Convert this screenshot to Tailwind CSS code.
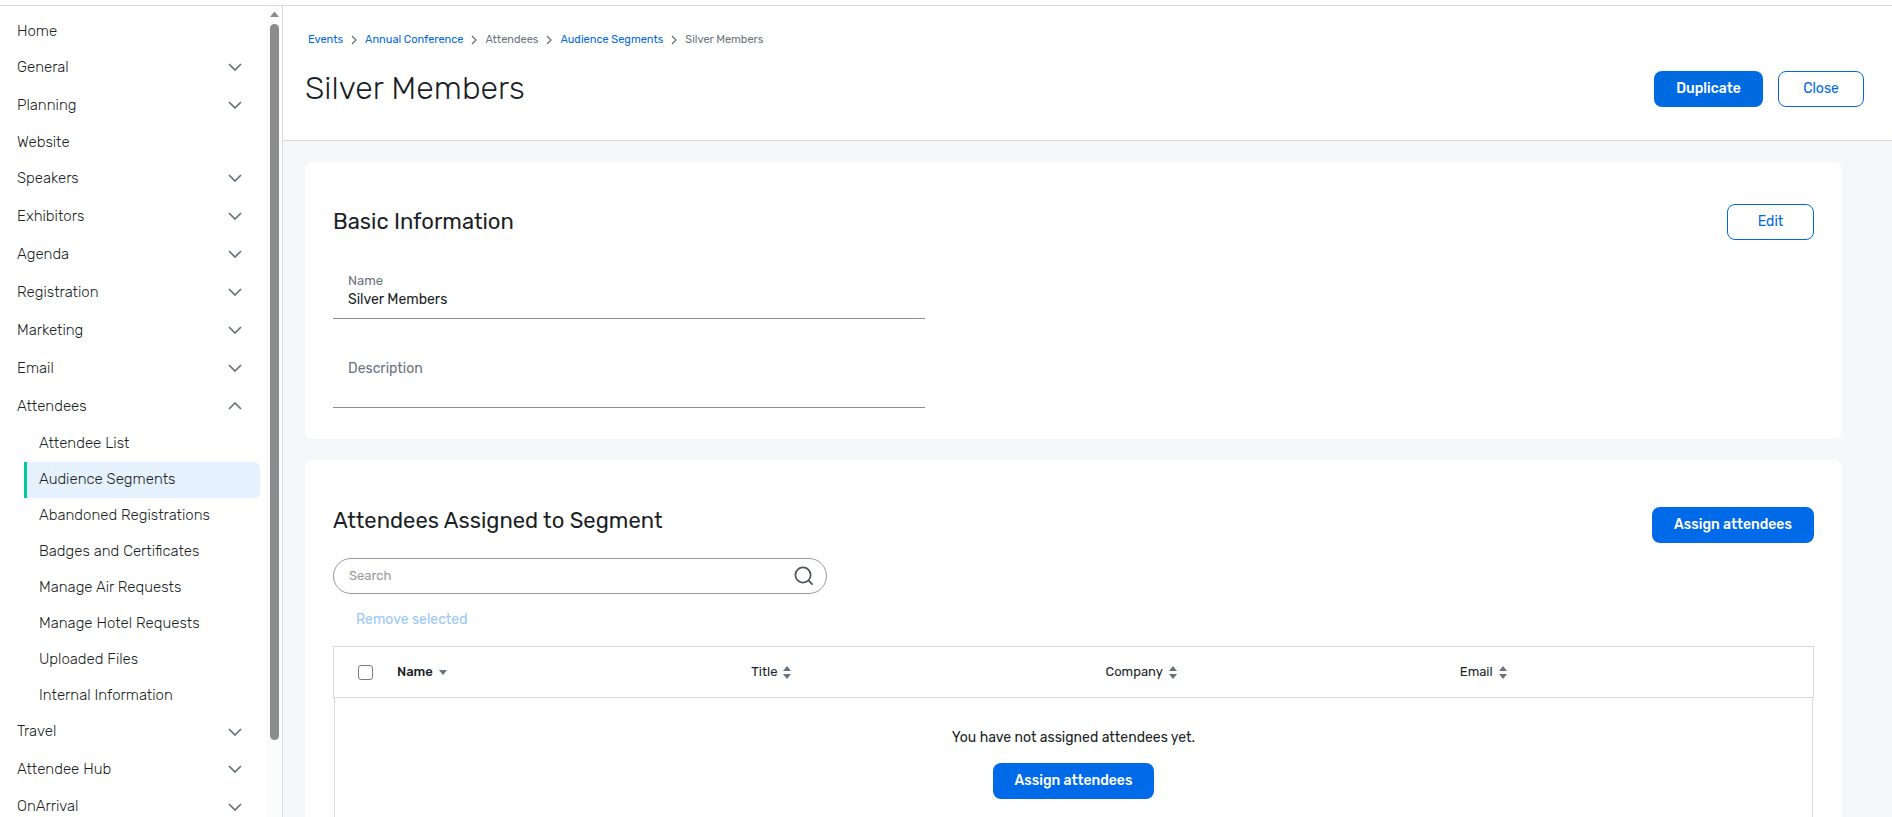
<!DOCTYPE html>
<html lang="en">
<head>
    <meta charset="UTF-8">
    <meta name="viewport" content="width=device-width, initial-scale=1.0">
    <title>Silver Members - Audience Segments</title>
    <script src="https://cdn.jsdelivr.net/npm/@tailwindcss/browser@4"></script>
</head>
<body class="flex flex-col h-screen overflow-hidden bg-white font-['Rubik','Roboto',sans-serif] text-[#1b1f27]">
<svg class="hidden">
    <symbol id="chevron" viewBox="0 0 14 8">
        <path d="M1 1l6 6 6-6" fill="none" stroke="currentColor" stroke-width="1.7"/>
    </symbol>
    <symbol id="crumb" viewBox="0 0 6 10">
        <path d="M1 1l4 4-4 4" fill="none" stroke="currentColor" stroke-width="1.3"/>
    </symbol>
    <symbol id="sort" viewBox="0 0 8 13">
        <path d="M0 5l4-5 4 5zM0 8h8l-4 5z" fill="currentColor"/>
    </symbol>
</svg>

<div class="h-1.5 shrink-0 border-b border-[#d9dadd]"></div>

<div class="flex flex-1 min-h-0">
    <!-- Sidebar -->
    <aside class="flex w-[283px] shrink-0 overflow-hidden border-r border-[#d9dadd]">
        <nav class="flex-1 pt-[7px] text-[15px] font-light text-[#1b1f27]">
            <a href="#" class="flex items-center h-9 pl-[17px]">Home</a>
            <button class="flex items-center justify-between w-full h-[38px] pl-[17px] pr-[25px] pb-0.5">General<svg class="w-3.5 h-2 text-[#69717d]"><use href="#chevron"/></svg></button>
            <button class="flex items-center justify-between w-full h-[38px] pl-[17px] pr-[25px] pb-0.5">Planning<svg class="w-3.5 h-2 text-[#69717d]"><use href="#chevron"/></svg></button>
            <a href="#" class="flex items-center h-[35px] pl-[17px]">Website</a>
            <button class="flex items-center justify-between w-full h-[38px] pl-[17px] pr-[25px] pb-0.5">Speakers<svg class="w-3.5 h-2 text-[#69717d]"><use href="#chevron"/></svg></button>
            <button class="flex items-center justify-between w-full h-[38px] pl-[17px] pr-[25px] pb-0.5">Exhibitors<svg class="w-3.5 h-2 text-[#69717d]"><use href="#chevron"/></svg></button>
            <button class="flex items-center justify-between w-full h-[38px] pl-[17px] pr-[25px] pb-0.5">Agenda<svg class="w-3.5 h-2 text-[#69717d]"><use href="#chevron"/></svg></button>
            <button class="flex items-center justify-between w-full h-[38px] pl-[17px] pr-[25px] pb-0.5">Registration<svg class="w-3.5 h-2 text-[#69717d]"><use href="#chevron"/></svg></button>
            <button class="flex items-center justify-between w-full h-[38px] pl-[17px] pr-[25px] pb-0.5">Marketing<svg class="w-3.5 h-2 text-[#69717d]"><use href="#chevron"/></svg></button>
            <button class="flex items-center justify-between w-full h-[38px] pl-[17px] pr-[25px] pb-0.5">Email<svg class="w-3.5 h-2 text-[#69717d]"><use href="#chevron"/></svg></button>
            <button class="flex items-center justify-between w-full h-[38px] pl-[17px] pr-[25px] pb-0.5" aria-expanded="true">Attendees<svg class="w-3.5 h-2 text-[#69717d] rotate-180"><use href="#chevron"/></svg></button>
            <div class="pl-6 pr-[7px]">
                <a href="#" class="flex items-center h-9 pl-[15px] pb-0.5">Attendee List</a>
                <a href="#" class="flex items-center h-9 pl-3 pb-0.5 border-l-3 border-[#00cb9b] rounded-r-md bg-[#e5f1fd]">Audience Segments</a>
                <a href="#" class="flex items-center h-9 pl-[15px] pb-0.5">Abandoned Registrations</a>
                <a href="#" class="flex items-center h-9 pl-[15px] pb-0.5">Badges and Certificates</a>
                <a href="#" class="flex items-center h-9 pl-[15px] pb-0.5">Manage Air Requests</a>
                <a href="#" class="flex items-center h-9 pl-[15px] pb-0.5">Manage Hotel Requests</a>
                <a href="#" class="flex items-center h-9 pl-[15px] pb-0.5">Uploaded Files</a>
                <a href="#" class="flex items-center h-9 pl-[15px] pb-0.5">Internal Information</a>
            </div>
            <button class="flex items-center justify-between w-full h-[37px] pl-[17px] pr-[25px] pb-0.5">Travel<svg class="w-3.5 h-2 text-[#69717d]"><use href="#chevron"/></svg></button>
            <button class="flex items-center justify-between w-full h-[38px] pl-[17px] pr-[25px] pb-0.5">Attendee Hub<svg class="w-3.5 h-2 text-[#69717d]"><use href="#chevron"/></svg></button>
            <button class="flex items-center justify-between w-full h-[37px] pl-[17px] pr-[25px] pb-0.5">OnArrival<svg class="w-3.5 h-2 text-[#69717d]"><use href="#chevron"/></svg></button>
        </nav>
        <!-- Scrollbar -->
        <div class="flex flex-col items-center w-[15px] pt-1.5 bg-[#fcfcfc]">
            <svg class="w-[9px] h-[5px] shrink-0 text-[#8b8b8b]" viewBox="0 0 9 5"><path d="M0 5l4-5h1l4 5z" fill="currentColor"/></svg>
            <div class="w-[9px] h-[89%] mt-[7px] rounded-full bg-[#8b8b8b]"></div>
        </div>
    </aside>

    <!-- Content -->
    <main class="flex-1 min-w-0 overflow-hidden bg-[#f6f7f9]">
        <header class="h-[135px] pt-[25px] pl-[22px] pr-7 bg-white border-b border-[#d9dadd]">
            <nav aria-label="Breadcrumb" class="flex items-center gap-2 h-[18px] pl-[3px] text-[11px] text-[#6b737f]">
                <a href="#" class="text-[#006ae1]">Events</a>
                <svg class="w-1.5 h-2.5"><use href="#crumb"/></svg>
                <a href="#" class="text-[#006ae1]">Annual Conference</a>
                <svg class="w-1.5 h-2.5"><use href="#crumb"/></svg>
                <span>Attendees</span>
                <svg class="w-1.5 h-2.5"><use href="#crumb"/></svg>
                <a href="#" class="text-[#006ae1]">Audience Segments</a>
                <svg class="w-1.5 h-2.5"><use href="#crumb"/></svg>
                <span>Silver Members</span>
            </nav>
            <div class="flex items-center justify-between mt-5">
                <h1 class="pb-0.5 text-[32px] leading-[38px] font-light">Silver Members</h1>
                <div class="flex gap-[15px]">
                    <button class="w-[109px] h-9 rounded-lg bg-[#006ae1] text-sm font-medium text-white">Duplicate</button>
                    <button class="w-[86px] h-9 rounded-lg border border-[#006ae1] text-sm text-[#006ae1]">Close</button>
                </div>
            </div>
        </header>

        <div class="flex flex-col gap-[21px] pt-[21px] pl-[22px] pr-[50px]">
            <section class="px-7 pt-[42px] pb-[31px] rounded-lg bg-white">
                <div class="flex items-center justify-between">
                    <h2 class="text-[22px] leading-8">Basic Information</h2>
                    <button class="w-[87px] h-9 rounded-lg border border-[#006ae1] text-sm text-[#006ae1]">Edit</button>
                </div>
                <dl class="w-2/5">
                    <div class="h-[79px] px-[15px] pt-8 border-b border-[#868d97]">
                        <dt class="text-[13px] leading-[18px] text-[#6b737f]">Name</dt>
                        <dd class="text-sm leading-5">Silver Members</dd>
                    </div>
                    <div class="h-[89px] px-[15px] pt-10 border-b border-[#868d97]">
                        <dt class="text-sm leading-5 text-[#6b737f]">Description</dt>
                        <dd></dd>
                    </div>
                </dl>
            </section>

            <section class="px-7 pt-[47px] pb-8 rounded-lg bg-white">
                <div class="flex items-start justify-between">
                    <h2 class="text-[22px] leading-7">Attendees Assigned to Segment</h2>
                    <button class="w-[162px] h-9 rounded-lg bg-[#006ae8] text-sm font-medium text-white">Assign attendees</button>
                </div>
                <form class="flex items-center justify-between w-1/3 h-9 mt-[15px] pl-[15px] pr-3 rounded-full border border-[#959ba5]">
                    <input type="search" aria-label="Search" placeholder="Search" class="flex-1 min-w-0 text-[13px] outline-none placeholder:text-[#979ba1]">
                    <button type="button" aria-label="Search">
                        <svg class="w-5 h-5 text-[#4b535f]" viewBox="0 0 20 20" fill="none" stroke="currentColor" stroke-width="1.7"><circle cx="9" cy="9" r="7.6"/><path d="M14.4 14.4l4.2 4.2"/></svg>
                    </button>
                </form>
                <button disabled class="block h-9 mt-2 pl-[23px] text-sm text-[#99c8f8]">Remove selected</button>
                <table class="w-full mt-2 table-fixed border-separate border-spacing-0 text-[13px]">
                    <thead>
                    <tr class="h-[52px]">
                        <th class="w-16 pl-6 text-left border-y border-l border-[#d9dadd]">
                            <input type="checkbox" aria-label="Select all" class="block w-[15px] h-[15px] appearance-none rounded-[3px] border border-[#767c86]">
                        </th>
                        <th class="text-left font-medium border-y border-[#d9dadd]"><span class="flex items-center gap-1.5">Name <svg class="w-2 h-[5px] text-[#69717d]" viewBox="0 0 8 5"><path d="M0 0h8l-4 5z" fill="currentColor"/></svg></span></th>
                        <th class="text-left font-normal border-y border-[#d9dadd]"><span class="flex items-center gap-1.5">Title <svg class="w-2 h-[13px] text-[#69717d]"><use href="#sort"/></svg></span></th>
                        <th class="text-left font-normal border-y border-[#d9dadd]"><span class="flex items-center gap-1.5">Company <svg class="w-2 h-[13px] text-[#69717d]"><use href="#sort"/></svg></span></th>
                        <th class="text-left font-normal border-y border-r border-[#d9dadd]"><span class="flex items-center gap-1.5">Email <svg class="w-2 h-[13px] text-[#69717d]"><use href="#sort"/></svg></span></th>
                    </tr>
                    </thead>
                    <tbody>
                    <tr>
                        <td colspan="5" class="px-px">
                            <div class="flex flex-col items-center gap-[15px] pt-[30px] pb-8 border-x border-b border-[#d9dadd]">
                                <p class="text-sm leading-5">You have not assigned attendees yet.</p>
                                <button class="w-[161px] h-9 rounded-lg bg-[#006ae8] text-sm font-medium text-white">Assign attendees</button>
                            </div>
                        </td>
                    </tr>
                    </tbody>
                </table>
            </section>
        </div>
    </main>
</div>
</body>
</html>
